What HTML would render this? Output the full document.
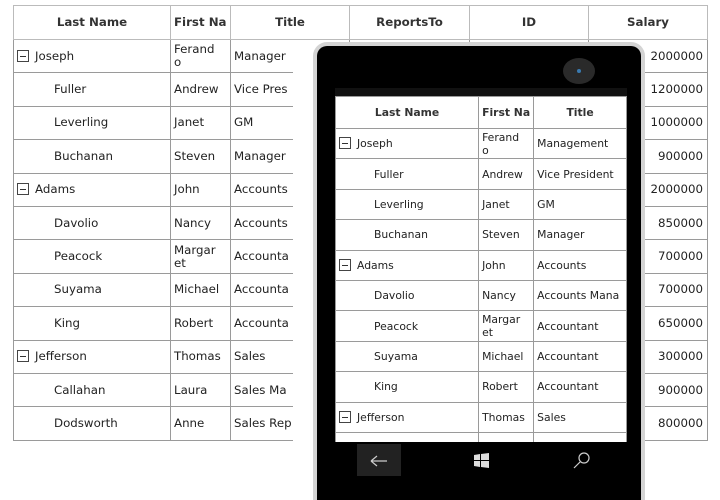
<!DOCTYPE html>
<html><head><meta charset="utf-8"><style>
*{margin:0;padding:0;box-sizing:border-box}
html{width:720px;height:500px;overflow:hidden}
body{width:720px;height:500px;overflow:hidden;background:#fff;font-family:"DejaVu Sans","Liberation Sans",sans-serif;color:#222;position:relative}
table{border-collapse:collapse;table-layout:fixed;position:absolute}
td,th{border:1px solid #9a9a9a;overflow:hidden;white-space:nowrap;text-align:left;padding:0 3px;font-weight:normal;line-height:13px}
th{font-weight:bold;text-align:center;color:#333}
.bg{left:13px;top:5px;font-size:11.8px}
.bg th{height:34px;border-color:#bbb}
.bg td{height:33.4px}
.r{text-align:right;padding-right:4px}
.ch{padding-left:40px}
.gp{padding-left:3px}
.bx{display:inline-block;width:12px;height:12px;border:1px solid #444;vertical-align:-2px;margin-right:6px;position:relative}
.bx:after{content:"";position:absolute;left:2px;right:2px;top:5px;height:1px;background:#333}
.ph{position:absolute;left:313px;top:42px;width:332px;height:468px;background:#000;border:4px solid #d4d4d4;border-bottom:none;border-radius:14px 14px 0 0}
.cam{position:absolute;left:563px;top:58px;width:32px;height:26px;border-radius:50%;background:#2a2a2a}
.cam:after{content:"";position:absolute;left:14px;top:11px;width:4px;height:4px;border-radius:50%;background:#3a7ab0}
.scr{position:absolute;left:335px;top:96px;width:292px;height:346px;background:#fff;overflow:hidden}
.in{left:0;top:0;font-size:10.8px}
.in th{height:32px}
.in td{height:30.4px}
.in .ch{padding-left:38px}
.nav{position:absolute;left:335px;top:442px;width:292px;height:36px;background:#000}
</style></head><body>
<table class="bg">
<colgroup><col style="width:157px"><col style="width:60px"><col style="width:119px"><col style="width:120px"><col style="width:119px"><col style="width:119px"></colgroup>
<tr><th>Last Name</th><th style="text-align:left">First Na</th><th>Title</th><th>ReportsTo</th><th>ID</th><th>Salary</th></tr>
<tr><td class="gp"><span class="bx"></span>Joseph</td><td>Ferand<br>o</td><td>Manager</td><td></td><td></td><td class="r">2000000</td></tr>
<tr><td class="ch">Fuller</td><td>Andrew</td><td>Vice Pres</td><td></td><td></td><td class="r">1200000</td></tr>
<tr><td class="ch">Leverling</td><td>Janet</td><td>GM</td><td></td><td></td><td class="r">1000000</td></tr>
<tr><td class="ch">Buchanan</td><td>Steven</td><td>Manager</td><td></td><td></td><td class="r">900000</td></tr>
<tr><td class="gp"><span class="bx"></span>Adams</td><td>John</td><td>Accounts</td><td></td><td></td><td class="r">2000000</td></tr>
<tr><td class="ch">Davolio</td><td>Nancy</td><td>Accounts</td><td></td><td></td><td class="r">850000</td></tr>
<tr><td class="ch">Peacock</td><td>Margar<br>et</td><td>Accounta</td><td></td><td></td><td class="r">700000</td></tr>
<tr><td class="ch">Suyama</td><td>Michael</td><td>Accounta</td><td></td><td></td><td class="r">700000</td></tr>
<tr><td class="ch">King</td><td>Robert</td><td>Accounta</td><td></td><td></td><td class="r">650000</td></tr>
<tr><td class="gp"><span class="bx"></span>Jefferson</td><td>Thomas</td><td>Sales</td><td></td><td></td><td class="r">300000</td></tr>
<tr><td class="ch">Callahan</td><td>Laura</td><td>Sales Ma</td><td></td><td></td><td class="r">900000</td></tr>
<tr><td class="ch">Dodsworth</td><td>Anne</td><td>Sales Rep</td><td></td><td></td><td class="r">800000</td></tr>
</table>
<div style="position:absolute;left:293px;top:40px;width:22px;height:460px;background:#fff"></div>
<div class="ph"></div>
<div class="cam"></div>
<div style="position:absolute;left:335px;top:88px;width:292px;height:8px;background:#111"></div>
<div class="scr">
<table class="in">
<colgroup><col style="width:145px"><col style="width:54px"><col style="width:93px"></colgroup>
<tr><th>Last Name</th><th style="text-align:left">First Na</th><th>Title</th></tr>
<tr><td class="gp"><span class="bx"></span>Joseph</td><td>Ferand<br>o</td><td>Management</td></tr>
<tr><td class="ch">Fuller</td><td>Andrew</td><td>Vice President</td></tr>
<tr><td class="ch">Leverling</td><td>Janet</td><td>GM</td></tr>
<tr><td class="ch">Buchanan</td><td>Steven</td><td>Manager</td></tr>
<tr><td class="gp"><span class="bx"></span>Adams</td><td>John</td><td>Accounts</td></tr>
<tr><td class="ch">Davolio</td><td>Nancy</td><td>Accounts Mana</td></tr>
<tr><td class="ch">Peacock</td><td>Margar<br>et</td><td>Accountant</td></tr>
<tr><td class="ch">Suyama</td><td>Michael</td><td>Accountant</td></tr>
<tr><td class="ch">King</td><td>Robert</td><td>Accountant</td></tr>
<tr><td class="gp"><span class="bx"></span>Jefferson</td><td>Thomas</td><td>Sales</td></tr>
<tr><td></td><td></td><td></td></tr>
</table>
</div>
<div class="nav">
<div style="position:absolute;left:22px;top:2px;width:44px;height:32px;background:#222"></div>
<svg style="position:absolute;left:0;top:0" width="292" height="36">
<path d="M36 19h16M36 19l6-5M36 19l6 5" stroke="#ccc" stroke-width="1.2" fill="none"/>
<path d="M139 13l6-1v6h-6zM146 12l8-1v7h-8zM139 19h6v6l-6-1zM146 19h8v7l-8-1z" fill="#ddd"/>
<circle cx="249" cy="16" r="5" stroke="#ccc" stroke-width="1.2" fill="none"/>
<path d="M245 20l-6 6" stroke="#ccc" stroke-width="1.2"/>
</svg>
</div>
</body></html>
